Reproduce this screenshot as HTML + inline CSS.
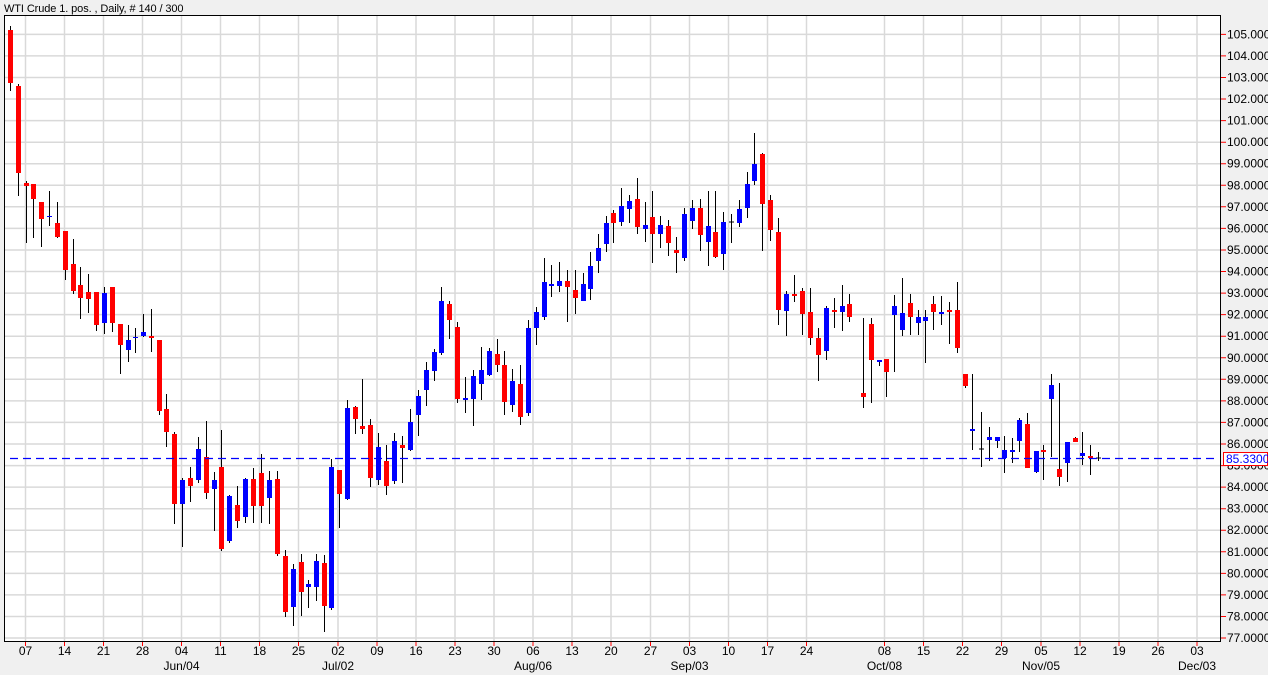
<!DOCTYPE html>
<html><head><meta charset="utf-8"><style>
html,body{margin:0;padding:0;background:#f0f0f0;}
svg{display:block;font-family:"Liberation Sans",sans-serif;}
</style></head><body>
<svg width="1268" height="675" xmlns="http://www.w3.org/2000/svg">
<rect width="1268" height="675" fill="#f0f0f0"/>
<text x="4" y="12" font-size="11" letter-spacing="-0.1" fill="#000">WTI Crude 1. pos. , Daily, # 140 / 300</text>
<rect x="4.5" y="15.5" width="1216" height="626" fill="#fff"/>
<g stroke="#d9d9d9" stroke-width="1.5">
<path d="M5 34.4H1220M5 55.9H1220M5 77.5H1220M5 99H1220M5 120.6H1220M5 142.2H1220M5 163.7H1220M5 185.3H1220M5 206.8H1220M5 228.4H1220M5 250H1220M5 271.5H1220M5 293.1H1220M5 314.6H1220M5 336.2H1220M5 357.8H1220M5 379.3H1220M5 400.9H1220M5 422.4H1220M5 444H1220M5 465.6H1220M5 487.1H1220M5 508.7H1220M5 530.2H1220M5 551.8H1220M5 573.4H1220M5 594.9H1220M5 616.5H1220M5 638H1220"/>
<path d="M25.5 16V641M64.5 16V641M103.5 16V641M142.5 16V641M181.5 16V641M220.5 16V641M259.5 16V641M298.5 16V641M338 16V641M377 16V641M416 16V641M455 16V641M494 16V641M533 16V641M572 16V641M611 16V641M650.5 16V641M689.5 16V641M728.5 16V641M767.5 16V641M806.5 16V641M884.5 16V641M923.5 16V641M962.5 16V641M1001.5 16V641M1041 16V641M1080 16V641M1119 16V641M1158 16V641M1197 16V641"/>
</g>
<path stroke="#000" stroke-width="1" fill="none" d="M10.5 26V91M18.5 84V196M26.5 181V243M33.5 184V238M41.5 202V247M49.5 191V226M57.5 202V238M65.5 231V280M73.5 239V294M80.5 267V319M88.5 274V313M96.5 292V331M104.5 287V334M112.5 287V332M120.5 324V374M128.5 325V362M135.5 328V353M143.5 314V337M151.5 309V352M159.5 340V415M166.5 394V447M174.5 432V524M182.5 478V547M190.5 467V502M198.5 437V483M206.5 421V499M214.5 472V531M221.5 430V551M229.5 495V543M237.5 486V528M245.5 478V523M253.5 468V523M261.5 454V523M269.5 471V524M277.5 471V556M285.5 550V617M293.5 564V626M301.5 554V616M308.5 580V608M316.5 554V601M324.5 555V632M331.5 459V610M339.5 470V528M347.5 400V500M355.5 406V434M362.5 379V434M370.5 419V487M378.5 433V485M386.5 445V495M394.5 433V484M402.5 436V483M410.5 409V451M418.5 390V436M426.5 362V406M434.5 349V381M441.5 287V355M449.5 301V339M457.5 322V403M465.5 377V413M473.5 370V426M481.5 347V400M489.5 348V376M497.5 339V372M504.5 351V415M512.5 369V412M520.5 365V425M528.5 320V416M536.5 307V345M544.5 258V320M551.5 265V297M559.5 262V292M567.5 270V322M575.5 270V314M583.5 273V301M590.5 252V300M598.5 234V273M606.5 216V252M613.5 210V243M621.5 188V226M629.5 195V223M637.5 178V234M645.5 202V242M652.5 191V263M660.5 216V248M668.5 220V256M676.5 237V273M684.5 208V261M692.5 200V229M700.5 199V251M708.5 191V266M715.5 191V258M723.5 212V270M731.5 214V243M739.5 200V227M747.5 172V218M754.5 133V185M762.5 153V251M770.5 195V241M778.5 218V325M786.5 291V336M794.5 275V302M802.5 288V335M810.5 288V345M818.5 328V381M826.5 306V360M834.5 298V328M842.5 285V331M849.5 294V322M863.5 318V408M871.5 318V403M879.5 360V366M886.5 359V397M894.5 295V372M902.5 278V336M910.5 294V335M918.5 310V335M925.5 310V363M933.5 296V330M941.5 296V325M949.5 302V344M957.5 282V353M965.5 374V388M972.5 374V450M981.5 412V467M989.5 427V461M997.5 437V448M1004.5 436V473M1012.5 438V463M1019.5 418V452M1027.5 413V468M1036.5 451V473M1043.5 445V480M1051.5 374V457M1059.5 383V486M1067.5 442V482M1075.5 437V442M1082.5 432V465M1090.5 445V475M1098.5 452V461"/>
<path fill="#ff0000" d="M8 30h5V83h-5zM16 86h5V173h-5zM24 183h5V186h-5zM31 184h5V199h-5zM39 202h5V219h-5zM55 223h5V237h-5zM63 231h5V270h-5zM71 264h5V291h-5zM78 285h5V298h-5zM86 292h5V299h-5zM94 292h5V325h-5zM110 287h5V323h-5zM118 324h5V345h-5zM149 336h5V338h-5zM157 340h5V411h-5zM164 409h5V432h-5zM172 434h5V504h-5zM188 478h5V486h-5zM204 457h5V493h-5zM219 467h5V549h-5zM235 505h5V521h-5zM251 479h5V506h-5zM259 473h5V506h-5zM275 479h5V554h-5zM283 556h5V612h-5zM299 562h5V592h-5zM322 563h5V606h-5zM337 470h5V494h-5zM353 407h5V419h-5zM360 426h5V429h-5zM368 425h5V478h-5zM384 461h5V486h-5zM400 445h5V448h-5zM447 304h5V320h-5zM455 327h5V399h-5zM495 354h5V365h-5zM502 365h5V402h-5zM518 384h5V417h-5zM565 281h5V287h-5zM573 290h5V298h-5zM611 213h5V223h-5zM635 199h5V227h-5zM650 217h5V234h-5zM666 226h5V243h-5zM674 250h5V253h-5zM698 208h5V235h-5zM713 232h5V257h-5zM760 154h5V204h-5zM768 200h5V230h-5zM776 232h5V310h-5zM792 294h5V296h-5zM800 291h5V314h-5zM808 312h5V338h-5zM816 338h5V355h-5zM832 310h5V312h-5zM847 304h5V317h-5zM861 393h5V397h-5zM869 324h5V360h-5zM884 359h5V372h-5zM908 303h5V317h-5zM931 304h5V312h-5zM947 310h5V312h-5zM955 310h5V348h-5zM963 374h5V386h-5zM1025 424h5V468h-5zM1041 450h5V452h-5zM1057 469h5V477h-5zM1073 438h5V442h-5zM1088 456h5V458h-5z"/>
<path fill="#0000ff" d="M47 216h5V217h-5zM102 293h5V323h-5zM126 340h5V350h-5zM133 337h5V338h-5zM141 332h5V336h-5zM180 480h5V504h-5zM196 449h5V480h-5zM212 480h5V489h-5zM227 496h5V541h-5zM243 479h5V517h-5zM267 480h5V498h-5zM291 569h5V607h-5zM306 584h5V587h-5zM314 561h5V587h-5zM329 467h5V608h-5zM345 408h5V499h-5zM376 447h5V480h-5zM392 441h5V481h-5zM408 422h5V450h-5zM416 396h5V415h-5zM424 370h5V390h-5zM432 352h5V371h-5zM439 301h5V353h-5zM463 398h5V400h-5zM471 376h5V399h-5zM479 370h5V384h-5zM487 351h5V375h-5zM510 381h5V405h-5zM526 328h5V413h-5zM534 312h5V328h-5zM542 282h5V317h-5zM549 284h5V286h-5zM557 281h5V286h-5zM581 284h5V301h-5zM588 266h5V289h-5zM596 248h5V261h-5zM604 223h5V244h-5zM619 206h5V222h-5zM627 201h5V209h-5zM643 225h5V229h-5zM658 225h5V234h-5zM682 214h5V258h-5zM690 208h5V221h-5zM706 226h5V242h-5zM721 222h5V254h-5zM737 209h5V223h-5zM745 184h5V208h-5zM752 164h5V181h-5zM784 294h5V311h-5zM824 308h5V351h-5zM840 306h5V312h-5zM877 360h5V362h-5zM892 306h5V315h-5zM900 313h5V330h-5zM916 317h5V323h-5zM923 317h5V321h-5zM939 312h5V314h-5zM970 429h5V431h-5zM987 437h5V440h-5zM995 437h5V441h-5zM1002 450h5V458h-5zM1010 450h5V452h-5zM1017 420h5V441h-5zM1034 451h5V472h-5zM1049 385h5V399h-5zM1065 442h5V463h-5zM1080 453h5V456h-5z"/>
<path fill="#000" d="M729 221.5h5v1h-5zM979 448.5h5v1h-5zM1096 457.5h5v1h-5z"/>
<path stroke="#0000ff" stroke-width="1.2" stroke-dasharray="8,5" d="M10 458.5H1218"/>
<rect x="4.5" y="15.5" width="1216" height="626" fill="none" stroke="#000" stroke-width="1"/>
<path stroke="#ff0000" stroke-width="1" d="M1221 34.4h5M1221 55.9h5M1221 77.5h5M1221 99h5M1221 120.6h5M1221 142.2h5M1221 163.7h5M1221 185.3h5M1221 206.8h5M1221 228.4h5M1221 250h5M1221 271.5h5M1221 293.1h5M1221 314.6h5M1221 336.2h5M1221 357.8h5M1221 379.3h5M1221 400.9h5M1221 422.4h5M1221 444h5M1221 465.6h5M1221 487.1h5M1221 508.7h5M1221 530.2h5M1221 551.8h5M1221 573.4h5M1221 594.9h5M1221 616.5h5M1221 638h5"/>
<path stroke="#ff0000" stroke-width="1" d="M25.5 642v4M64.5 642v4M103.5 642v4M142.5 642v4M181.5 642v4M220.5 642v4M259.5 642v4M298.5 642v4M338 642v4M377 642v4M416 642v4M455 642v4M494 642v4M533 642v4M572 642v4M611 642v4M650.5 642v4M689.5 642v4M728.5 642v4M767.5 642v4M806.5 642v4M884.5 642v4M923.5 642v4M962.5 642v4M1001.5 642v4M1041 642v4M1080 642v4M1119 642v4M1158 642v4M1197 642v4"/>
<g font-size="12" fill="#000" dominant-baseline="central">
<text x="1227" y="34.4">105.0000</text><text x="1227" y="55.9">104.0000</text><text x="1227" y="77.5">103.0000</text><text x="1227" y="99">102.0000</text><text x="1227" y="120.6">101.0000</text><text x="1227" y="142.2">100.0000</text><text x="1227" y="163.7">99.0000</text><text x="1227" y="185.3">98.0000</text><text x="1227" y="206.8">97.0000</text><text x="1227" y="228.4">96.0000</text><text x="1227" y="250">95.0000</text><text x="1227" y="271.5">94.0000</text><text x="1227" y="293.1">93.0000</text><text x="1227" y="314.6">92.0000</text><text x="1227" y="336.2">91.0000</text><text x="1227" y="357.8">90.0000</text><text x="1227" y="379.3">89.0000</text><text x="1227" y="400.9">88.0000</text><text x="1227" y="422.4">87.0000</text><text x="1227" y="444">86.0000</text><text x="1227" y="465.6">85.0000</text><text x="1227" y="487.1">84.0000</text><text x="1227" y="508.7">83.0000</text><text x="1227" y="530.2">82.0000</text><text x="1227" y="551.8">81.0000</text><text x="1227" y="573.4">80.0000</text><text x="1227" y="594.9">79.0000</text><text x="1227" y="616.5">78.0000</text><text x="1227" y="638">77.0000</text>
</g>
<rect x="1223.5" y="452.5" width="44" height="13" fill="#fff" stroke="#ff0000" stroke-width="1"/>
<text x="1226" y="463" font-size="12" fill="#0000ff">85.3300</text>
<g font-size="12" fill="#000" text-anchor="middle">
<text x="25.5" y="655">07</text><text x="64.5" y="655">14</text><text x="103.5" y="655">21</text><text x="142.5" y="655">28</text><text x="181.5" y="655">04</text><text x="220.5" y="655">11</text><text x="259.5" y="655">18</text><text x="298.5" y="655">25</text><text x="338" y="655">02</text><text x="377" y="655">09</text><text x="416" y="655">16</text><text x="455" y="655">23</text><text x="494" y="655">30</text><text x="533" y="655">06</text><text x="572" y="655">13</text><text x="611" y="655">20</text><text x="650.5" y="655">27</text><text x="689.5" y="655">03</text><text x="728.5" y="655">10</text><text x="767.5" y="655">17</text><text x="806.5" y="655">24</text><text x="884.5" y="655">08</text><text x="923.5" y="655">15</text><text x="962.5" y="655">22</text><text x="1001.5" y="655">29</text><text x="1041" y="655">05</text><text x="1080" y="655">12</text><text x="1119" y="655">19</text><text x="1158" y="655">26</text><text x="1197" y="655">03</text>
<text x="181.5" y="670">Jun/04</text><text x="338" y="670">Jul/02</text><text x="533" y="670">Aug/06</text><text x="689.5" y="670">Sep/03</text><text x="884.5" y="670">Oct/08</text><text x="1041" y="670">Nov/05</text><text x="1197" y="670">Dec/03</text>
</g>
</svg>
</body></html>
